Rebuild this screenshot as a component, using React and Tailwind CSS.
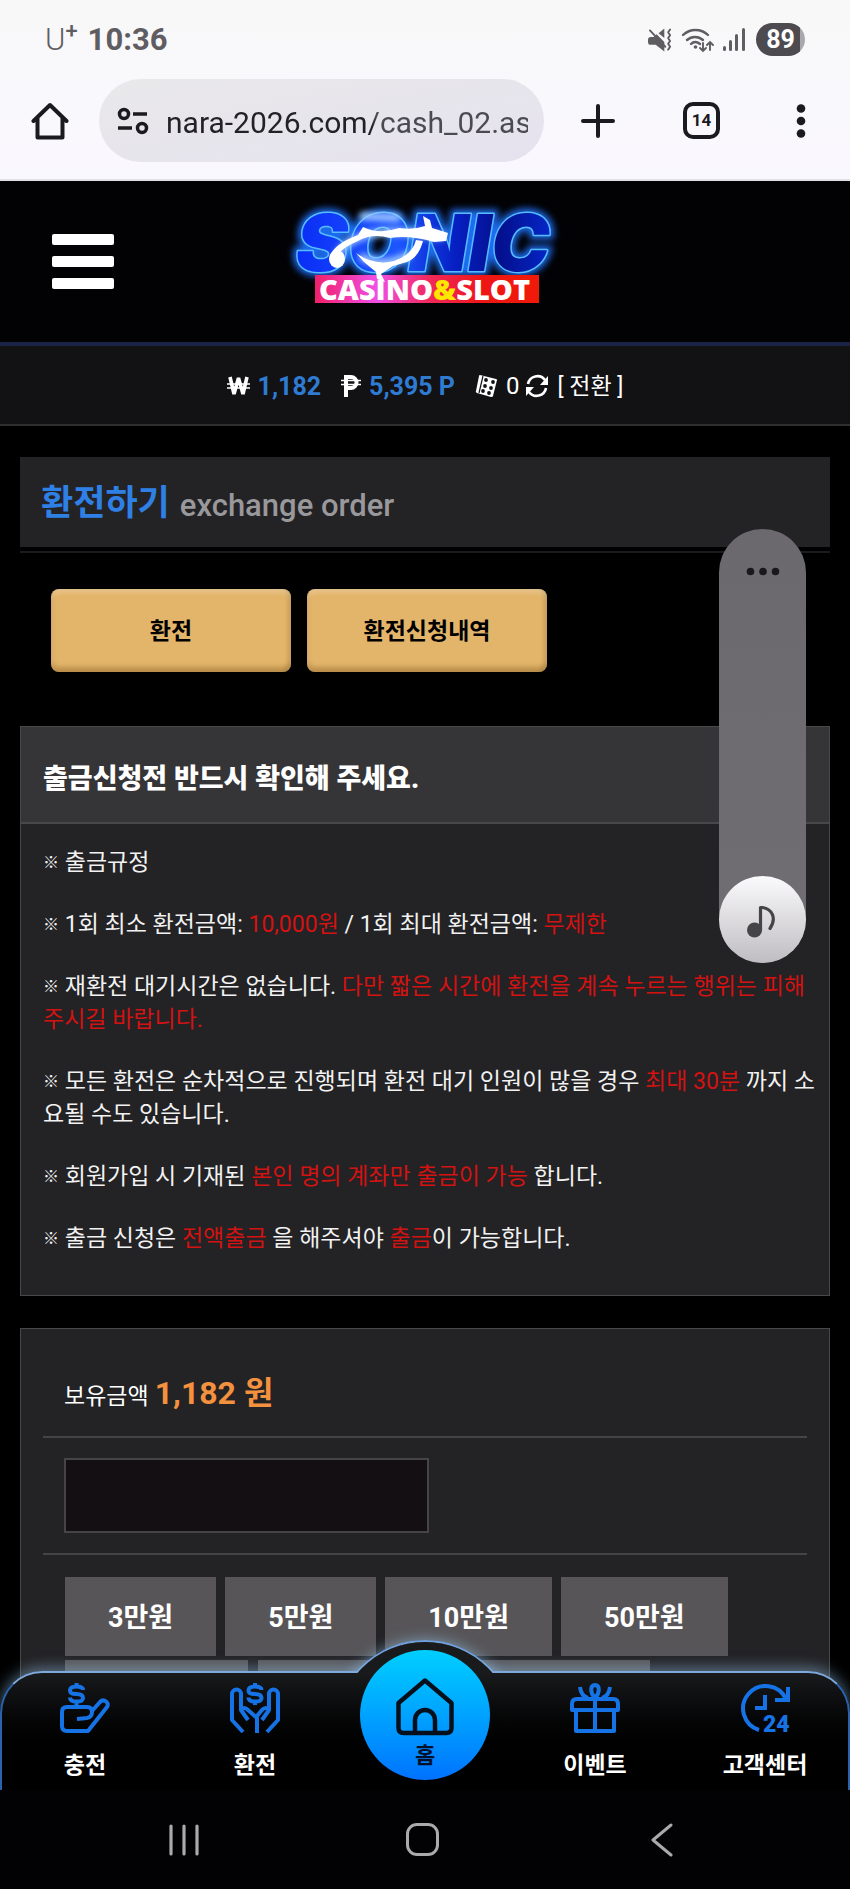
import React from "react";

const RED = "text-[#d31212]";

function StatusBar() {
  return (
    <div className="flex h-[79px] shrink-0 items-center justify-between px-[45px] text-[#5f5d61]">
      <div className="flex items-center gap-2.5 text-[31px] leading-none">
        <span className="flex font-light">
          U<span className="-mt-1 text-[22px] font-medium">+</span>
        </span>
        <span className="font-bold">10:36</span>
      </div>
      <div className="flex items-center gap-[9px]">
        <svg width="24" height="24" viewBox="0 0 25 24" fill="none" aria-hidden="true">
          <path d="M0 12q0-3 3-3h3l3-3 8 8v10l-9-7H3q-3 0-3-3z" fill="#5f5d61" />
          <path d="M11 5l6-5v10z" fill="#5f5d61" />
          <path d="M2 2l16 17M23 1l-2 3 2 3-2 3 2 3-2 3 2 3-2 3" stroke="#5f5d61" strokeWidth="2" strokeLinecap="round" strokeLinejoin="round" />
        </svg>
        <svg width="33" height="26" viewBox="0 0 33 26" fill="none" stroke="#5f5d61" strokeWidth="2.4" strokeLinecap="round" aria-hidden="true">
          <path d="M2 8a18 18 0 0 1 25 0M6 13a12 12 0 0 1 16 0M10 17q4-4 9 0" />
          <circle cx="14.500" cy="20" r="1.800" fill="#5f5d61" stroke="none" />
          <path d="M22 16v8m-3-3l3 3 3-3M29 23v-8m-3 3l3-3 3 3" strokeWidth="1.900" />
        </svg>
        <svg width="22" height="24" viewBox="0 0 22 24" fill="#5f5d61" aria-hidden="true">
          <rect x="0" y="18" width="3" height="5" rx="1.500" />
          <rect x="6" y="12" width="3" height="11" rx="1.500" />
          <rect x="12" y="6" width="3" height="17" rx="1.500" />
          <rect x="19" y="0" width="3" height="23" rx="1.500" />
        </svg>
        <span className="ml-[2px] flex h-[33px] w-[49px] items-center justify-center rounded-full bg-linear-to-r from-[#4d4b4f] from-90% to-[#aaa8ac] to-90% text-[25px] leading-none font-bold text-white">
          89
        </span>
      </div>
    </div>
  );
}

function BrowserBar() {
  return (
    <div className="flex h-[102px] shrink-0 items-start border-b-2 border-[#e2e1e6] pl-[31px]">
      <button type="button" aria-label="홈 화면" className="flex h-[83px] w-[68px] shrink-0 items-center">
        <svg width="38" height="38" viewBox="0 0 38 38" fill="none" stroke="#1b1a20" strokeWidth="4" strokeLinejoin="round" strokeLinecap="round" aria-hidden="true">
          <path d="M2.500 19L19 3l16.500 16M6.500 16v19.500h25V16" />
        </svg>
      </button>
      <div className="flex h-[83px] min-w-0 flex-1 items-center gap-4 rounded-full bg-linear-to-br from-[#e9e8ea] to-[#e5e2ee] pr-4 pl-[18px]">
        <svg width="33" height="28" viewBox="0 0 33 28" fill="none" stroke="#1b1a20" strokeWidth="3.500" className="shrink-0" aria-hidden="true">
          <circle cx="7" cy="7" r="4.500" />
          <path d="M16 7h14M1 21h14" />
          <circle cx="25" cy="21" r="4.500" />
        </svg>
        <input
          type="text"
          aria-label="주소"
          defaultValue="nara-2026.com/cash_02.asp"
          className="w-full min-w-0 bg-linear-to-r from-[#222126] from-57% to-[#4c4a51] to-58% bg-clip-text pt-1 text-[30px] text-transparent outline-none"
        />
      </div>
      <div className="flex h-[83px] w-[306px] shrink-0 items-center">
        <button type="button" aria-label="새 탭" className="flex w-[107px] justify-center">
          <svg width="34" height="34" viewBox="0 0 34 34" stroke="#1b1a20" strokeWidth="4" strokeLinecap="round" aria-hidden="true">
            <path d="M17 2v30M2 17h30" />
          </svg>
        </button>
        <button type="button" className="mx-[32px] flex h-[37px] w-[37px] items-center justify-center rounded-[10px] border-4 border-[#1b1a20] text-[17px] leading-none font-bold text-[#1b1a20]">
          14
        </button>
        <button type="button" aria-label="메뉴" className="flex w-[98px] justify-center">
          <svg width="10" height="34" viewBox="0 0 10 34" fill="#1b1a20" aria-hidden="true">
            <circle cx="5" cy="4.500" r="4.300" />
            <circle cx="5" cy="17" r="4.300" />
            <circle cx="5" cy="29.500" r="4.300" />
          </svg>
        </button>
      </div>
    </div>
  );
}

function Logo() {
  return (
    <svg width="300" height="130" viewBox="-5 0 300 130" role="img" aria-label="SONIC CASINO&SLOT">
      <defs>
        <filter id="glow" x="-20%" y="-40%" width="140%" height="180%">
          <feGaussianBlur stdDeviation="3.5" />
        </filter>
        <filter id="soft" x="-20%" y="-20%" width="140%" height="140%">
          <feGaussianBlur stdDeviation="3" />
        </filter>
        <linearGradient id="letters" x1="0" x2="1" y1="0" y2="0">
          <stop offset="0" stopColor="#0a2cf5" />
          <stop offset="0.4" stopColor="#1c55ff" />
          <stop offset="0.62" stopColor="#0620c4" />
          <stop offset="0.8" stopColor="#04108e" />
          <stop offset="1" stopColor="#0526c8" />
        </linearGradient>
        <linearGradient id="banner" x1="0" x2="1" y1="0" y2="0">
          <stop offset="0" stopColor="#f0206a" />
          <stop offset="0.28" stopColor="#f050e8" />
          <stop offset="0.5" stopColor="#f02a60" />
          <stop offset="0.75" stopColor="#ee1515" />
          <stop offset="1" stopColor="#f01a08" />
        </linearGradient>
      </defs>
      <g fontFamily="Inter, sans-serif" fontWeight="900" fontStyle="italic" fontSize="78">
        <text x="16" y="81" fill="#1d6cf0" stroke="#1d6cf0" strokeWidth="9" filter="url(#glow)" aria-hidden="true">SONIC</text>
        <text x="16" y="81" fill="url(#letters)" stroke="#56bcff" strokeWidth="3" strokeLinejoin="round" paintOrder="stroke">SONIC</text>
      </g>
      <rect x="35" y="85" width="224" height="28" fill="url(#banner)" />
      <path d="M57 68C62 52 84 42 112 42s30 4 52 4M80 66q24 14 50-2M80 26l40 2" stroke="#a9d2ff" strokeWidth="7" fill="none" filter="url(#soft)" />
      <g fill="#fff">
        <ellipse cx="57" cy="69" rx="8" ry="9" />
        <path d="M50 66Q54 54 78 45l5-8q16 8 36 1 15 2 26-2l-2-10 7 4 2 8 16 5-2 8-12 1q-24-7-44-4-18-5-32 3-17 7-22 16z" />
        <path d="M76 63q18 13 38 8 18-6 22-21l7 1q-4 16-16 21l-14 4-12 8 4 8-8-3-1-7-12-10z" />
      </g>
      <text x="39" y="110" fontFamily="'Open Sans', sans-serif" fontWeight="800" fontSize="29" fill="#fff">
        CASINO<tspan fill="#ffe600">&amp;</tspan>SLOT
      </text>
    </svg>
  );
}

function Header() {
  return (
    <header className="grid h-[165px] grid-cols-[1fr_300px_1fr] items-start border-b-4 border-[#1a2447] bg-[#020104] pt-[9px]">
      <div className="pt-[44px] pl-[52px]">
        <button type="button" aria-label="전체 메뉴" className="flex w-[62px] flex-col gap-[11px]">
          <span className="h-[11px] w-full rounded-xs bg-white" />
          <span className="h-[11px] w-full rounded-xs bg-white" />
          <span className="h-[11px] w-full rounded-xs bg-white" />
        </button>
      </div>
      <Logo />
    </header>
  );
}

function Balances() {
  return (
    <div className="flex h-[80px] items-center justify-center border-b-2 border-[#2f2e31] bg-[#121114] pt-0.5 text-2xl leading-none text-white">
      <svg width="23" height="20" viewBox="0 0 23 20" fill="none" stroke="#fff" aria-hidden="true">
        <path d="M3 1l4 17 4.500-16L16 18l4-17" strokeWidth="3.600" strokeLinejoin="bevel" />
        <path d="M0 8h23M0 12h23" strokeWidth="1.600" />
      </svg>
      <span className="ml-2 text-[25px] font-bold text-[#2f7bd2]">1,182</span>
      <svg width="20" height="22" viewBox="0 0 20 22" fill="none" stroke="#fff" className="ml-5" aria-hidden="true">
        <path d="M5 22V2h5a5 5 0 0 1 0 11H5" strokeWidth="4" />
        <path d="M0 5.500h20M0 9.500h20" strokeWidth="1.700" />
      </svg>
      <span className="ml-2 text-[25px] font-bold text-[#2f7bd2]">5,395 P</span>
      <svg width="23" height="24" viewBox="0 0 23 24" className="ml-5" aria-hidden="true">
        <path d="M5 1l16 4q1 0 1 1l-4 16q0 1-2 1L2 19q-2-1-1-2L4 2q0-1 1-1z" fill="#fff" />
        <path d="M8 2L4 19" stroke="#121114" strokeWidth="1.200" />
        <g fill="#121114">
          <circle cx="11" cy="6" r="1.900" />
          <circle cx="18" cy="8" r="1.900" />
          <circle cx="10" cy="12" r="1.900" />
          <circle cx="16" cy="14" r="1.900" />
          <circle cx="8" cy="17" r="1.900" />
          <circle cx="14" cy="19" r="1.900" />
        </g>
      </svg>
      <span className="ml-2">0</span>
      <button type="button" className="ml-1.5 flex items-center gap-2 text-[23px]">
        <svg width="24" height="24" viewBox="0 0 24 24" fill="none" aria-hidden="true">
          <path d="M3 10A9.500 9.500 0 0 1 20 6M21 14A9.500 9.500 0 0 1 4 18" stroke="#fff" strokeWidth="2.600" />
          <path d="M23 2v9h-8zM1 22v-9h8z" fill="#fff" />
        </svg>
        <span>[ 전환 ]</span>
      </button>
    </div>
  );
}

function Rule({ children }) {
  return (
    <p>
      <span className="align-[2px] text-[16px] leading-none font-bold">※</span> {children}
    </p>
  );
}

function Notice() {
  return (
    <section className="mt-[54px] border border-[#48474a] bg-[#232225]">
      <h2 className="flex h-[97px] items-center border-b-2 border-[#48474a] bg-[#353436] px-[22px] pt-2.5 text-[27px] font-black text-white">
        출금신청전 반드시 확인해 주세요.
      </h2>
      <div className="flex flex-col gap-[29px] pt-[22px] pb-[40px] pl-[22px] text-[23px] leading-[33px] text-[#f2f2f2]">
        <Rule>출금규정</Rule>
        <Rule>
          1회 최소 환전금액: <span className={RED}>10,000원</span> / 1회 최대 환전금액: <span className={RED}>무제한</span>
        </Rule>
        <Rule>
          재환전 대기시간은 없습니다. <span className={RED}>다만 짧은 시간에 환전을 계속 누르는 행위는 피해 주시길 바랍니다.</span>
        </Rule>
        <Rule>
          모든 환전은 순차적으로 진행되며 환전 대기 인원이 많을 경우 <span className={RED}>최대 30분</span> 까지 소요될 수도 있습니다.
        </Rule>
        <Rule>
          회원가입 시 기재된 <span className={RED}>본인 명의 계좌만 출금이 가능</span> 합니다.
        </Rule>
        <Rule>
          출금 신청은 <span className={RED}>전액출금</span> 을 해주셔야 <span className={RED}>출금</span>이 가능합니다.
        </Rule>
      </div>
    </section>
  );
}

function OrderForm() {
  const amounts = ["3만원", "5만원", "10만원", "50만원"];
  return (
    <form className="mt-8 border border-[#48474a] bg-[#232225] px-[22px]" onSubmit={(e) => e.preventDefault()}>
      <div className="flex h-[109px] items-baseline gap-1.5 border-b-2 border-[#444346] px-[21px] pt-[40px] text-[23px] text-white">
        <label htmlFor="amount">보유금액</label>
        <strong className="text-[32px] font-bold text-[#f4913f]">1,182 원</strong>
      </div>
      <div className="flex h-[117px] items-center border-b-2 border-[#444346] px-[21px]">
        <input id="amount" type="text" className="h-[75px] w-[365px] border-2 border-[#454447] bg-[#130f12] px-4 text-2xl text-white outline-none" />
      </div>
      <div className="flex flex-col gap-1 px-[22px] pt-[22px]">
        <div className="flex gap-[9px] text-[27px] font-bold text-white">
          {amounts.map((a) => (
            <button key={a} type="button" className="h-[79px] bg-[#575558] px-[43px] pt-1">
              {a}
            </button>
          ))}
        </div>
        <div className="flex gap-2.5">
          <button type="button" aria-label="100만원" className="h-[79px] w-[183px] bg-[#575558]" />
          <button type="button" aria-label="전액" className="h-[79px] w-[183px] bg-[#575558]" />
          <button type="button" aria-label="초기화" className="h-[79px] w-[199px] bg-[#575558]" />
        </div>
      </div>
    </form>
  );
}

function FloatingPill() {
  return (
    <div className="absolute top-[348px] right-[44px] flex h-[434px] w-[87px] flex-col items-center justify-between rounded-full bg-linear-to-b from-[#6b696d] to-[#706e72]">
      <button type="button" aria-label="더보기" className="pt-[38px]">
        <svg width="34" height="9" viewBox="0 0 34 9" fill="#19181b" aria-hidden="true">
          <circle cx="4.500" cy="4.500" r="3.800" />
          <circle cx="17" cy="4.500" r="3.800" />
          <circle cx="29.500" cy="4.500" r="3.800" />
        </svg>
      </button>
      <button type="button" aria-label="음악" className="flex h-[87px] w-[87px] items-center justify-center rounded-full bg-linear-to-b from-[#fbfafc] to-[#bfbdc1]">
        <svg width="32" height="34" viewBox="1 0 32 34" fill="none" className="mt-1" aria-hidden="true">
          <circle cx="8.500" cy="25" r="7.500" fill="#454446" />
          <path d="M14.500 25V2.500h2C26 4 31 13 24 23.500" stroke="#454446" strokeWidth="3.200" strokeLinecap="round" strokeLinejoin="round" />
        </svg>
      </button>
    </div>
  );
}

const iconProps = {
  width: 50,
  height: 50,
  viewBox: "0 0 50 50",
  fill: "none",
  stroke: "#1673e6",
  strokeWidth: 4,
  strokeLinejoin: "round",
  overflow: "visible",
  "aria-hidden": true,
};

function DepositIcon() {
  return (
    <svg {...iconProps}>
      <path d="M23 7c0-3-3-3.500-6.500-3.500S10 4.500 10 7.500s2 3.500 6.500 3.500 6.500 1 6.500 4-3 3.500-6.500 3.500S10 18 10 14.500M16.500 0v3.500M16.500 18.500V24" />
      <path d="M17 36l10-1q5-1 5-6 0-5-5-5H7q-5 0-5 5v14q0 5 5 5h21l19-24c3-4-3-9-7-5l-8 9" />
    </svg>
  );
}

function WithdrawIcon() {
  return (
    <svg {...iconProps}>
      <path d="M31.500 7c0-3-3-3.500-6.500-3.500s-6.500 1-6.500 4 2 3.500 6.500 3.500 6.500 1 6.500 4-3 3.500-6.500 3.500-6.500-.5-6.500-4M25 0v3.500M25 18.500V22" />
      <path d="M13 49L2 37V11a4.500 4.500 0 0 1 9 0v16l7 10M11 27q3-4 7 0l9 8v15" />
      <path d="M37 49l11-12V11a4.500 4.500 0 0 0-9 0v16l-7 10M39 27q-3-4-7 0l-5 6" />
    </svg>
  );
}

function GiftIcon() {
  return (
    <svg {...iconProps}>
      <path d="M2 27v-6q0-5 5-5h36q5 0 5 5v6zM6 28v20h38V28M25 16v32" />
      <path d="M25 15c-5-5-5-13 0-13s5 8 0 13zM10 4q1 9 8 11M40 4q-1 9-8 11" />
    </svg>
  );
}

function SupportIcon() {
  return (
    <svg {...iconProps}>
      <path d="M19 47A22.500 22.500 0 1 1 46 16M48 4v13H35M25 12v13H15" strokeLinejoin="miter" />
      <text x="23" y="49" fontFamily="Roboto, sans-serif" fontWeight="900" fontSize="23" fill="#1673e6" stroke="none">24</text>
    </svg>
  );
}

function NavItem({ icon, label }) {
  return (
    <a href="#" className="flex flex-col items-center gap-4 pt-[12px] text-[23px] leading-[33px] font-bold text-white">
      {icon}
      {label}
    </a>
  );
}

function BottomNav() {
  return (
    <nav className="absolute inset-x-0 bottom-0 h-[119px]">
      <div className="absolute -top-[31px] left-1/2 size-[182px] -translate-x-1/2 rounded-full border-2 border-[#6f9fdc] shadow-[0_0_14px_rgba(150,200,240,0.6)] [clip-path:inset(-20px_-20px_100px_-20px)]" />
      <div className="absolute inset-0 rounded-t-[42px] border-x-2 border-t-2 border-x-[#2c62ac] border-t-[#7ea9dc] bg-linear-to-b from-[#191a1c] to-black to-90% shadow-[0_-4px_14px_rgba(150,200,240,0.45)] [clip-path:inset(-20px_0_0_0)]" />
      <div className="absolute -top-[29px] left-1/2 size-[178px] -translate-x-1/2 rounded-full bg-[#191a1c] [clip-path:inset(0_0_146px_0)]" />
      <div className="relative grid h-full grid-cols-5">
        <NavItem icon={<DepositIcon />} label="충전" />
        <NavItem icon={<WithdrawIcon />} label="환전" />
        <a
          href="#"
          className="-mt-[21px] flex size-[130px] flex-col items-center gap-0.5 justify-self-center rounded-full bg-linear-to-b from-[#00cfff] to-[#0072ff] pt-[27px] text-[22px] leading-[33px] font-bold text-[#03102c]"
        >
          <svg width="60" height="60" viewBox="0 0 60 60" fill="none" stroke="#06101c" strokeWidth="4.500" strokeLinejoin="round" aria-hidden="true">
            <path d="M30 3.500L3.500 26v25q0 5 5 5h43q5 0 5-5V26z" />
            <path d="M20 56V43a10 10 0 0 1 20 0v13" />
          </svg>
          홈
        </a>
        <NavItem icon={<GiftIcon />} label="이벤트" />
        <NavItem icon={<SupportIcon />} label="고객센터" />
      </div>
    </nav>
  );
}

function SystemBar() {
  return (
    <div className="grid h-[99px] shrink-0 grid-cols-3 items-center justify-items-center bg-[#020104] pr-[68px] pl-[64px]">
      <button type="button" aria-label="최근 앱">
        <svg width="32" height="34" viewBox="0 0 32 34" stroke="#aaa9ac" strokeWidth="3.200" strokeLinecap="round" aria-hidden="true">
          <path d="M3 3v28M16 3v28M29 3v28" />
        </svg>
      </button>
      <button type="button" aria-label="홈" className="size-[33px] rounded-[11px] border-3 border-[#aaa9ac]" />
      <button type="button" aria-label="뒤로">
        <svg width="22" height="34" viewBox="0 0 22 34" fill="none" stroke="#aaa9ac" strokeWidth="3" strokeLinecap="round" strokeLinejoin="round" aria-hidden="true">
          <path d="M20 2L2 17l18 15" />
        </svg>
      </button>
    </div>
  );
}

export default function App() {
  const tab =
    "h-[83px] w-[240px] rounded-lg bg-[#e3b56b] pt-1 shadow-[inset_0_-5px_5px_rgba(120,80,20,0.35),inset_0_3px_5px_rgba(255,255,255,0.3),inset_-3px_0_4px_rgba(120,80,20,0.2)]";
  return (
    <div className="flex h-screen flex-col overflow-hidden bg-black font-[Roboto,'Noto_Sans_CJK_KR',sans-serif]">
      <div className="shrink-0 bg-linear-to-b from-[#f8f8f8] to-[#faf8ff]">
        <StatusBar />
        <BrowserBar />
      </div>
      <div className="relative min-h-0 flex-1">
        <div className="h-full overflow-y-auto [scrollbar-width:none]">
          <Header />
          <Balances />
          <main className="px-[20px] pt-[31px]">
            <div className="border-b-2 border-[#1b1a1d] pb-1">
              <h1 className="flex h-[90px] items-center gap-2.5 bg-[#232225] px-[21px] pt-1 text-[35px] font-bold text-[#2f80e4]">
                환전하기 <small className="pt-1 text-[31px] font-medium text-[#99989b]">exchange order</small>
              </h1>
            </div>
            <div className="mt-9 flex gap-4 pl-[31px] text-[23px] font-bold text-black">
              <button type="button" className={tab}>
                환전
              </button>
              <button type="button" className={tab}>
                환전신청내역
              </button>
            </div>
            <Notice />
            <OrderForm />
          </main>
        </div>
        <FloatingPill />
        <BottomNav />
      </div>
      <SystemBar />
    </div>
  );
}
